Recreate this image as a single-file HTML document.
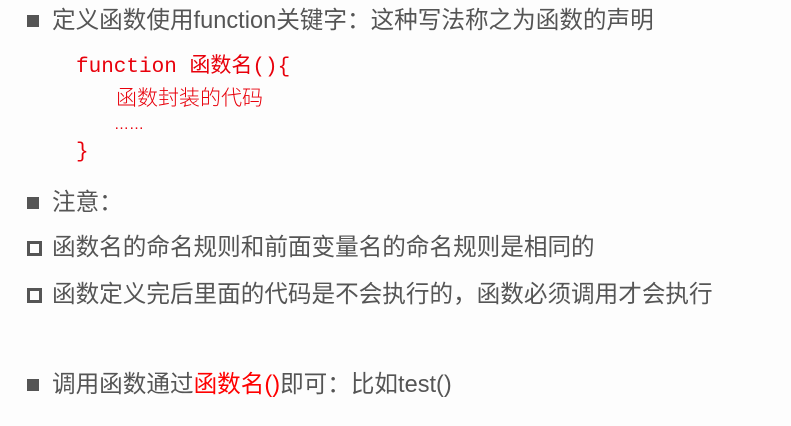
<!DOCTYPE html>
<html><head><meta charset="utf-8"><style>
body{margin:0;width:791px;height:426px;background:#fdfdfd;position:relative;overflow:hidden;font-family:"Liberation Sans","Noto Sans CJK SC",sans-serif;color:#555;}
.t{position:absolute;left:52px;font-size:23.6px;line-height:30px;white-space:nowrap;}
.b{position:absolute;left:27px;width:12px;height:12px;background:#555;}
.h{position:absolute;left:27px;width:9px;height:9px;border:3px solid #555;}
.c{position:absolute;color:#e8000b;font-family:"Liberation Mono","Noto Sans CJK SC",monospace;font-size:21px;line-height:26px;white-space:nowrap;}
.r{color:#f00;}
</style></head><body>
<div class="b" style="top:15px"></div>
<div class="t" style="top:6px">定义函数使用function关键字：这种写法称之为函数的声明</div>
<div class="c" style="left:76px;top:55px">function 函数名(){</div>
<div class="c" style="left:116px;top:84px;font-family:'Noto Sans CJK SC',sans-serif;font-weight:300">函数封装的代码</div>
<div class="c" style="left:114px;top:112px;font-size:15px;font-family:'Liberation Sans',sans-serif">……</div>
<div class="c" style="left:76px;top:140px">}</div>
<div class="b" style="top:197px"></div>
<div class="t" style="top:188px">注意：</div>
<div class="h" style="top:241px"></div>
<div class="t" style="top:233px">函数名的命名规则和前面变量名的命名规则是相同的</div>
<div class="h" style="top:288px"></div>
<div class="t" style="top:280px">函数定义完后里面的代码是不会执行的，函数必须调用才会执行</div>
<div class="b" style="top:379px"></div>
<div class="t" style="top:370px">调用函数通过<span class="r">函数名()</span>即可：比如test()</div>
</body></html>
